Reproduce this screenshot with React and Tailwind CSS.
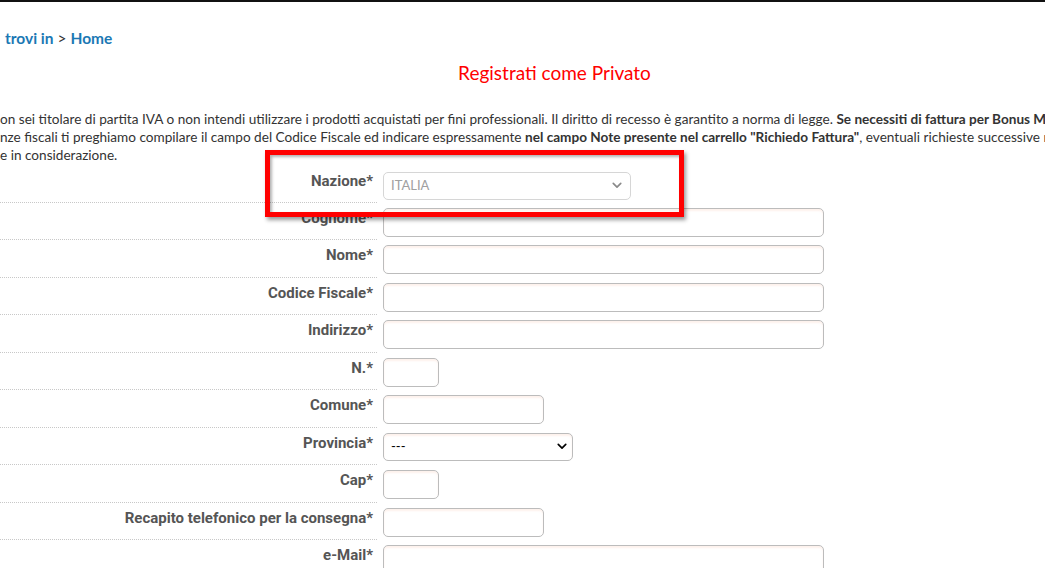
const fields = [
  { label: 'Cognome*', w: 'w-[441px]' },
  { label: 'Nome*', w: 'w-[441px]' },
  { label: 'Codice Fiscale*', w: 'w-[441px]' },
  { label: 'Indirizzo*', w: 'w-[441px]' },
  { label: 'N.*', w: 'w-[56px]' },
  { label: 'Comune*', w: 'w-[161px]' },
  { label: 'Provincia*', select: true },
  { label: 'Cap*', w: 'w-[56px]' },
  { label: 'Recapito telefonico per la consegna*', w: 'w-[161px]' },
  { label: 'e-Mail*', w: 'w-[441px]' },
]

function Chevron({ className = '' }) {
  return (
    <svg className={className} viewBox="0 0 12 8" fill="none" stroke="currentColor" strokeWidth={2}>
      <path d="M1.5 1.5L6 6l4.5-4.5" strokeLinecap="round" strokeLinejoin="round" />
    </svg>
  )
}

function Row({ label, children, first = false }) {
  return (
    <div className="flex h-[37.5px]">
      <div
        className={`w-[377px] shrink-0 text-right pr-[4px] border-b border-dotted border-[#c8c8c8] text-[15px] leading-[20px] font-bold text-[#555] whitespace-nowrap ${
          first ? 'pt-[6px]' : 'pt-[5px]'
        }`}
        style={{ fontFamily: 'Roboto, sans-serif' }}
      >
        {label}
      </div>
      <div className={`pl-[6px] ${first ? 'pt-[6.5px]' : 'pt-[5px]'}`}>{children}</div>
    </div>
  )
}

export default function App() {
  return (
    <div className="relative w-[1045px] h-[568px] overflow-hidden bg-white" style={{ fontFamily: 'Lato, sans-serif' }}>
      <div className="h-[2px] bg-[#111]" />

      {/* breadcrumb */}
      <div className="mt-[26px] pl-[5px] text-[15.5px] leading-[20px] whitespace-nowrap">
        <span className="font-bold text-[#1b78b4]">trovi in</span>
        <span className="text-[#333]"> &gt; </span>
        <span className="font-bold text-[#1b78b4]">Home</span>
      </div>

      <h1 className="mt-[12px] ml-[64px] text-center text-[19px] leading-[26px] text-[#ff0000]">
        Registrati come Privato
      </h1>

      {/* intro */}
      <div className="mt-[24px] text-[13.6px] leading-[18px] text-[#333] whitespace-nowrap">
        <div>
          on sei titolare di partita IVA o non intendi utilizzare i prodotti acquistati per fini professionali. Il diritto di recesso è garantito a norma di legge.{' '}
          <b>Se necessiti di fattura per Bonus Mobili</b>
        </div>
        <div>
          nze fiscali ti preghiamo compilare il campo del Codice Fiscale ed indicare espressamente{' '}
          <b>nel campo Note presente nel carrello "Richiedo Fattura"</b>, eventuali richieste successive non
        </div>
        <div>e in considerazione.</div>
      </div>

      {/* form */}
      <div className="mt-[1px]">
        <Row label="Nazione*" first>
          <div className="w-[248px] h-[28px] rounded-[5px] border border-[#d6d6d6] flex items-center justify-between pl-[7px] pr-[8px] text-[13px] text-[#a0a0a0]">
            <span>ITALIA</span>
            <Chevron className="w-[10px] h-[7px] text-[#8a8a8a]" />
          </div>
        </Row>
        {fields.map(({ label, w, select }) => (
          <Row key={label} label={label}>
            {select ? (
              <div className="w-[190px] h-[28px] rounded-[5px] border border-[#bcbcbc] flex items-center justify-between pl-[7px] pr-[5px] text-[13px] text-black shadow-[inset_0_2px_2px_rgba(250,215,200,0.35)]">
                <span>---</span>
                <Chevron className="w-[10px] h-[7px] text-black" />
              </div>
            ) : (
              <div className={`${w} h-[29px] rounded-[5px] border border-[#bcbcbc] bg-white shadow-[inset_0_2px_2px_rgba(250,215,200,0.35)]`} />
            )}
          </Row>
        ))}
      </div>

      {/* highlight annotation */}
      <div className="absolute left-[265px] top-[150px] w-[419px] h-[67px] border-[5px] border-[#ff0000] shadow-[2px_3px_4px_rgba(0,0,0,0.4),inset_2px_2px_3px_rgba(0,0,0,0.3)]" />
    </div>
  )
}
